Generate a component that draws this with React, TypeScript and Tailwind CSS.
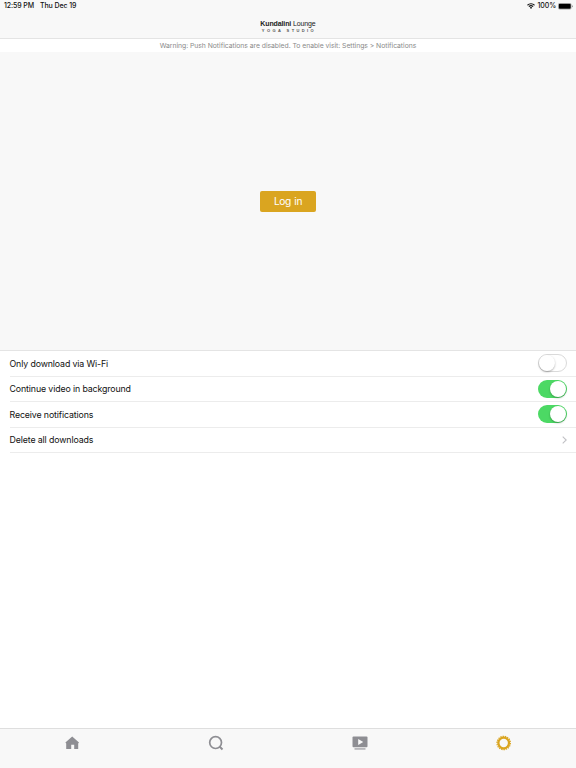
import { useState } from "react";

type SettingKey = "wifiOnly" | "backgroundVideo" | "notifications";

const settingRows: { key: SettingKey; label: string }[] = [
  { key: "wifiOnly", label: "Only download via Wi-Fi" },
  { key: "backgroundVideo", label: "Continue video in background" },
  { key: "notifications", label: "Receive notifications" },
];

function StatusBar() {
  return (
    <div className="flex h-3 items-center justify-between pl-1 pr-[3px] text-[7px] font-medium leading-3 tracking-[-0.1px] text-[#111]">
      <div className="flex gap-[6px]">
        <span>12:59 PM</span>
        <span>Thu Dec 19</span>
      </div>
      <div className="flex items-center">
        <svg className="mr-[3px] h-[6px] w-2" viewBox="0 0 16 12" fill="none" stroke="#111" strokeWidth="2.2">
          <path d="M1 4.5a10 10 0 0 1 14 0M3.8 7.3a6 6 0 0 1 8.4 0" />
          <path d="M5.6 9.2a3.4 3.4 0 0 1 4.8 0L8 11.8z" fill="#111" stroke="none" />
        </svg>
        <span className="tracking-[-0.1px]">100%</span>
        <svg className="ml-[2px] h-[7px] w-[15px]" viewBox="0 0 30 14">
          <rect x="0.5" y="0.5" width="26" height="12" rx="3" fill="none" stroke="#888" />
          <rect x="1.5" y="1.5" width="24" height="10" rx="2" fill="#000" />
          <path d="M28 4.5v4q1.5-.5 1.5-2t-1.5-2" fill="#777" />
        </svg>
      </div>
    </div>
  );
}

function Toggle({ on, onClick }: { on: boolean; onClick: () => void }) {
  return (
    <button
      role="switch"
      aria-checked={on}
      onClick={onClick}
      className={`flex h-[18px] w-[29px] items-center rounded-full ${
        on ? "justify-end bg-[#4cd964] p-px" : "justify-start border-[1.5px] border-[#dadada] bg-white"
      }`}
    >
      <span className="h-4 w-4 shrink-0 rounded-full bg-white shadow-[0_1px_2px_rgba(0,0,0,0.3)]" />
    </button>
  );
}

function HomeIcon() {
  return (
    <svg className="h-4 w-4" viewBox="0 0 16 16" fill="#8e8e93">
      <path d="M8.2 1.4 15 7.6 14.2 8.4V14.1H10.2V9.8H7.2V14.1H2.2V8.4L1.4 7.6Z" />
    </svg>
  );
}

function SearchIcon() {
  return (
    <svg className="h-4 w-4" viewBox="0 0 16 16" fill="none" stroke="#8e8e93" strokeWidth="1.7">
      <circle cx="7.6" cy="7.6" r="5.9" />
      <path d="m11.5 11.5 3 3" strokeWidth="1.9" />
    </svg>
  );
}

function VideoIcon() {
  return (
    <svg className="h-4 w-4" viewBox="0 0 16 16" fill="#8e8e93">
      <rect x="0.5" y="1.5" width="15" height="10.8" rx="1" />
      <path d="M6.2 4v6l5-3z" fill="#f8f8f8" />
      <rect x="2.5" y="13.4" width="11" height="1.1" />
    </svg>
  );
}

function SettingsIcon() {
  return (
    <svg className="h-4 w-4" viewBox="0 0 16 16" fill="none" stroke="#daa520">
      <circle cx="7.7" cy="8" r="5.3" strokeWidth="2.2" />
      <circle cx="7.7" cy="8" r="6.7" strokeWidth="1.2" pathLength="36" strokeDasharray="1.2 0.8" />
    </svg>
  );
}

const tabs = [
  { name: "Home", Icon: HomeIcon },
  { name: "Search", Icon: SearchIcon },
  { name: "Videos", Icon: VideoIcon },
  { name: "Settings", Icon: SettingsIcon },
];

export default function App() {
  const [settings, setSettings] = useState<Record<SettingKey, boolean>>({
    wifiOnly: false,
    backgroundVideo: true,
    notifications: true,
  });

  const toggleSetting = (key: SettingKey) => {
    setSettings((prev) => ({ ...prev, [key]: !prev[key] }));
  };

  return (
    <div className="flex h-[768px] w-[576px] flex-col overflow-hidden bg-white font-['Inter',sans-serif] antialiased">
      <header className="h-[39px] border-b border-[#e4e4e4] bg-[#f8f8f8]">
        <StatusBar />
        <div className="flex flex-col items-center pt-[7px] text-[#222]">
          <h1 className="whitespace-nowrap font-['Liberation_Sans',sans-serif] text-[7px] leading-[9px] tracking-[-0.12px]">
            <b>Kundalini</b> Lounge
          </h1>
          <p className="mt-px pl-[2px] font-['Liberation_Sans',sans-serif] text-[4px] font-bold leading-[4px] tracking-[2.4px] text-[#555]">
            YOGA STUDIO
          </p>
        </div>
      </header>
      <p className="h-[13px] text-center text-[6.8px] leading-[13px] tracking-[-0.03px] text-[#8a8a8a]">
        Warning: Push Notifications are disabled. To enable visit: Settings &gt; Notifications
      </p>
      <section className="flex h-[299px] items-center justify-center border-b border-[#e4e4e4] bg-[#f8f8f8]">
        <button className="h-[21px] w-14 rounded-[2px] bg-[#daa520] text-[10.2px] leading-[21px] tracking-[-0.35px] text-white [word-spacing:0.8px]">
          Log in
        </button>
      </section>
      <main className="flex-1 text-[8.8px] tracking-[-0.12px] text-[#111]">
        {settingRows.map(({ key, label }) => (
          <div key={key} className="ml-[9.5px] flex h-[25.6px] items-center justify-between border-b border-[#ececec] pr-[9px]">
            <span>{label}</span>
            <Toggle on={settings[key]} onClick={() => toggleSetting(key)} />
          </div>
        ))}
        <div className="ml-[9.5px] flex h-[25.6px] items-center justify-between border-b border-[#ececec] pr-[9px]">
          <span>Delete all downloads</span>
          <svg className="h-2 w-[5px]" viewBox="0 0 5 8" fill="none" stroke="#c0c0c5" strokeWidth="1.1">
            <path d="M.7.6 4.2 4 .7 7.4" />
          </svg>
        </div>
      </main>
      <nav className="grid h-10 grid-cols-4 border-t border-[#dedede] bg-[#f8f8f8] pt-[6px]">
        {tabs.map(({ name, Icon }) => (
          <button key={name} aria-label={name} className="flex items-start justify-center">
            <Icon />
          </button>
        ))}
      </nav>
    </div>
  );
}
